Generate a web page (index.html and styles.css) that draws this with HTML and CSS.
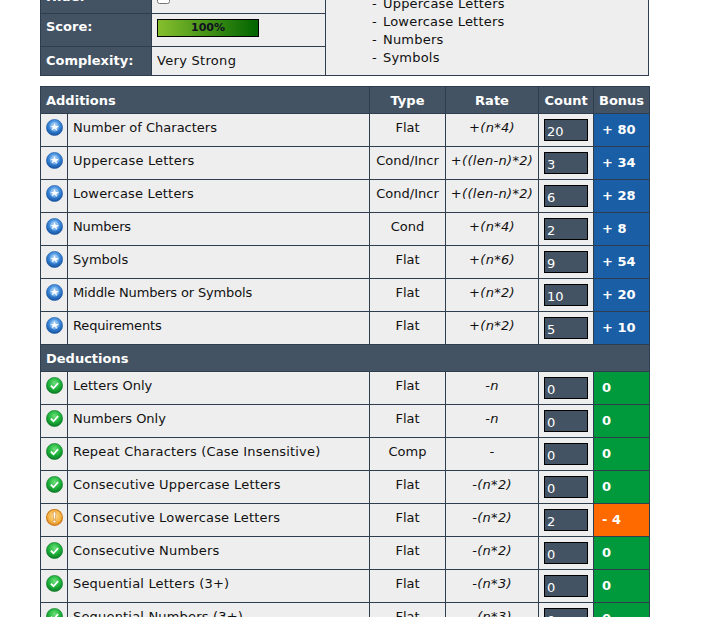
FILE: index.html
```html
<!DOCTYPE html>
<html lang="en">
<head>
<meta charset="utf-8">
<title>Password Meter</title>
<link rel="stylesheet" href="styles.css">
</head>
<body>
<svg class="defs" width="0" height="0" aria-hidden="true">
  <defs>
    <radialGradient id="gb" cx="50%" cy="35%" r="65%"><stop offset="0" stop-color="#8cc4f4"/><stop offset="0.55" stop-color="#3a86d8"/><stop offset="1" stop-color="#14509e"/></radialGradient>
    <radialGradient id="gg" cx="50%" cy="35%" r="65%"><stop offset="0" stop-color="#6ee07a"/><stop offset="0.55" stop-color="#1fb43c"/><stop offset="1" stop-color="#0a7a24"/></radialGradient>
    <radialGradient id="go" cx="50%" cy="40%" r="65%"><stop offset="0" stop-color="#fcdf9a"/><stop offset="0.6" stop-color="#f5b445"/><stop offset="1" stop-color="#d97f1c"/></radialGradient>
    <symbol id="i-add" viewBox="0 0 16 16"><circle cx="8" cy="8" r="7.6" fill="url(#gb)" stroke="#1d5aa6" stroke-width=".6"/><circle cx="8" cy="7.4" r="4.3" fill="#a9d0f5" opacity=".55"/><path d="M8 3.8l1.1 2.7 2.9.2-2.2 1.9.7 2.8L8 9l-2.5 1.6.7-2.8L4 6.7l2.9-.2z" fill="#fff"/></symbol>
    <symbol id="i-ok" viewBox="0 0 16 16"><circle cx="8" cy="8" r="7.6" fill="url(#gg)" stroke="#0c7a28" stroke-width=".6"/><path d="M4.6 8.2l2.4 2.4 4.4-4.8" fill="none" stroke="#fff" stroke-width="1.7"/></symbol>
    <symbol id="i-warn" viewBox="0 0 16 16"><circle cx="8" cy="8" r="7.5" fill="url(#go)" stroke="#c9791c" stroke-width="1"/><path d="M6.7 2.8h2.6l-.5 6.8H7.2z" fill="#fff" stroke="#c9791c" stroke-width=".5"/><circle cx="8" cy="11.8" r="1.3" fill="#fff" stroke="#c9791c" stroke-width=".5"/></symbol>
  </defs>
</svg>
<main class="page">
  <table class="summary">
    <tbody>
      <tr>
        <th class="label">Hide:</th>
        <td class="value"><input class="check" type="checkbox"></td>
        <td class="reqs" rowspan="3">
          <div class="req"><span class="dash">-</span>Uppercase Letters</div>
          <div class="req"><span class="dash">-</span>Lowercase Letters</div>
          <div class="req"><span class="dash">-</span>Numbers</div>
          <div class="req"><span class="dash">-</span>Symbols</div>
        </td>
      </tr>
      <tr>
        <th class="label top">Score:</th>
        <td class="value top"><div class="score">100%</div></td>
      </tr>
      <tr class="last">
        <th class="label">Complexity:</th>
        <td class="value strength">Very Strong</td>
      </tr>
    </tbody>
  </table>

  <table class="detail">
    <colgroup>
      <col class="c-icon"><col class="c-name"><col class="c-type"><col class="c-rate"><col class="c-count"><col class="c-bonus">
    </colgroup>
    <thead>
      <tr class="head">
        <th colspan="2" class="left">Additions</th><th>Type</th><th>Rate</th><th>Count</th><th>Bonus</th>
      </tr>
    </thead>
    <tbody>
      <tr><td class="ic"><svg class="icon"><use href="#i-add"/></svg></td><td>Number of Characters</td><td class="mid">Flat</td><td class="rate">+(n*4)</td><td class="cnt"><input class="num" value="20"></td><td class="bonus blue">+ 80</td></tr>
      <tr><td class="ic"><svg class="icon"><use href="#i-add"/></svg></td><td class="wide">Uppercase Letters</td><td class="mid">Cond/Incr</td><td class="rate">+((len-n)*2)</td><td class="cnt"><input class="num" value="3"></td><td class="bonus blue">+ 34</td></tr>
      <tr><td class="ic"><svg class="icon"><use href="#i-add"/></svg></td><td class="wide">Lowercase Letters</td><td class="mid">Cond/Incr</td><td class="rate">+((len-n)*2)</td><td class="cnt"><input class="num" value="6"></td><td class="bonus blue">+ 28</td></tr>
      <tr><td class="ic"><svg class="icon"><use href="#i-add"/></svg></td><td class="tight">Numbers</td><td class="mid">Cond</td><td class="rate">+(n*4)</td><td class="cnt"><input class="num" value="2"></td><td class="bonus blue">+ 8</td></tr>
      <tr><td class="ic"><svg class="icon"><use href="#i-add"/></svg></td><td>Symbols</td><td class="mid">Flat</td><td class="rate">+(n*6)</td><td class="cnt"><input class="num" value="9"></td><td class="bonus blue">+ 54</td></tr>
      <tr><td class="ic"><svg class="icon"><use href="#i-add"/></svg></td><td class="tight">Middle Numbers or Symbols</td><td class="mid">Flat</td><td class="rate">+(n*2)</td><td class="cnt"><input class="num" value="10"></td><td class="bonus blue">+ 20</td></tr>
      <tr><td class="ic"><svg class="icon"><use href="#i-add"/></svg></td><td class="tight">Requirements</td><td class="mid">Flat</td><td class="rate">+(n*2)</td><td class="cnt"><input class="num" value="5"></td><td class="bonus blue">+ 10</td></tr>
      <tr class="head"><th colspan="6" class="left">Deductions</th></tr>
      <tr><td class="ic"><svg class="icon"><use href="#i-ok"/></svg></td><td>Letters Only</td><td class="mid">Flat</td><td class="rate">-n</td><td class="cnt"><input class="num" value="0"></td><td class="bonus green">0</td></tr>
      <tr><td class="ic"><svg class="icon"><use href="#i-ok"/></svg></td><td>Numbers Only</td><td class="mid">Flat</td><td class="rate">-n</td><td class="cnt"><input class="num" value="0"></td><td class="bonus green">0</td></tr>
      <tr><td class="ic"><svg class="icon"><use href="#i-ok"/></svg></td><td class="wide">Repeat Characters (Case Insensitive)</td><td class="mid">Comp</td><td class="rate">-</td><td class="cnt"><input class="num" value="0"></td><td class="bonus green">0</td></tr>
      <tr><td class="ic"><svg class="icon"><use href="#i-ok"/></svg></td><td class="wide">Consecutive Uppercase Letters</td><td class="mid">Flat</td><td class="rate">-(n*2)</td><td class="cnt"><input class="num" value="0"></td><td class="bonus green">0</td></tr>
      <tr><td class="ic"><svg class="icon"><use href="#i-warn"/></svg></td><td class="wide">Consecutive Lowercase Letters</td><td class="mid">Flat</td><td class="rate">-(n*2)</td><td class="cnt"><input class="num" value="2"></td><td class="bonus orange">- 4</td></tr>
      <tr><td class="ic"><svg class="icon"><use href="#i-ok"/></svg></td><td class="wide">Consecutive Numbers</td><td class="mid">Flat</td><td class="rate">-(n*2)</td><td class="cnt"><input class="num" value="0"></td><td class="bonus green">0</td></tr>
      <tr><td class="ic"><svg class="icon"><use href="#i-ok"/></svg></td><td class="wide">Sequential Letters (3+)</td><td class="mid">Flat</td><td class="rate">-(n*3)</td><td class="cnt"><input class="num" value="0"></td><td class="bonus green">0</td></tr>
      <tr><td class="ic"><svg class="icon"><use href="#i-ok"/></svg></td><td class="wide">Sequential Numbers (3+)</td><td class="mid">Flat</td><td class="rate">-(n*3)</td><td class="cnt"><input class="num" value="0"></td><td class="bonus green">0</td></tr>
    </tbody>
  </table>
</main>
</body>
</html>
```
FILE: styles.css
```css
html, body { margin: 0; padding: 0; height: 617px; overflow: hidden; background: #fff; }
body { font: 13px/16px "DejaVu Sans", Verdana, sans-serif; color: #111; }
.defs { position: absolute; }
.page { width: 609px; margin: -20px 0 0 40px; }
table { border-collapse: collapse; table-layout: fixed; width: 609px; }
td, th { border: 1px solid #2f3e4f; padding: 0; }

.summary { margin-bottom: 10px; }
.summary tr { height: 33px; }
.summary tr.last { height: 29px; }
.label { width: 111px; background: #435363; color: #fff; font-weight: bold; text-align: left; padding: 0 5px; box-sizing: border-box; }
.value { width: 174px; background: #eee; padding: 0 5px; box-sizing: border-box; }
.label.top, .value.top { vertical-align: top; padding-top: 5px; }
.strength { letter-spacing: .3px; }
.reqs { background: #eee; padding: 0 0 8px 46px; vertical-align: bottom; box-sizing: border-box; letter-spacing: .2px; }
.req { display: flex; height: 18px; line-height: 18px; }
.dash { width: 11px; }
.check { margin: 0; width: 13px; height: 13px; display: block; }
.score { width: 100px; height: 16px; line-height: 16px; border: 1px solid #000; font-size: 11px; font-weight: bold; text-align: center; color: #112; background: linear-gradient(to right, #86bf2d, #006400); }

.c-icon { width: 27px; }
.c-name { width: 302px; }
.c-type { width: 76px; }
.c-rate { width: 93px; }
.c-count { width: 55px; }
.c-bonus { width: 56px; }

.head th { background: #435363; color: #fff; font-weight: bold; height: 27px; padding-top: 1px; box-sizing: border-box; text-align: center; }
.head th.left { text-align: left; padding-left: 5px; }

.detail td { background: #eee; vertical-align: top; padding-top: 6px; box-sizing: border-box; height: 33px; }
.detail td.ic { padding: 5px 0 0 5px; }
.icon { display: block; width: 17px; height: 17px; }
.detail td:nth-child(2) { padding-left: 5px; }
.detail td.wide { letter-spacing: .18px; }
.detail td.tight { letter-spacing: -.15px; }
.detail td.mid { text-align: center; }
.detail td.rate { text-align: center; font-style: italic; letter-spacing: .3px; }
.detail td.cnt { padding: 5px 0 0 5px; }
.num { display: block; box-sizing: border-box; width: 44px; height: 22px; padding: 3px 2px 0; margin: 0; border: 1px solid #000; border-radius: 0; background: #435363; color: #fff; font: 13px/16px "DejaVu Sans", Verdana, sans-serif; }
.detail td.bonus { color: #fff; font-weight: bold; padding: 8px 0 0 8px; }
.detail td.blue { background: #1a5ea6; }
.detail td.green { background: #009a3c; }
.detail td.orange { background: #ff6a00; }
```
